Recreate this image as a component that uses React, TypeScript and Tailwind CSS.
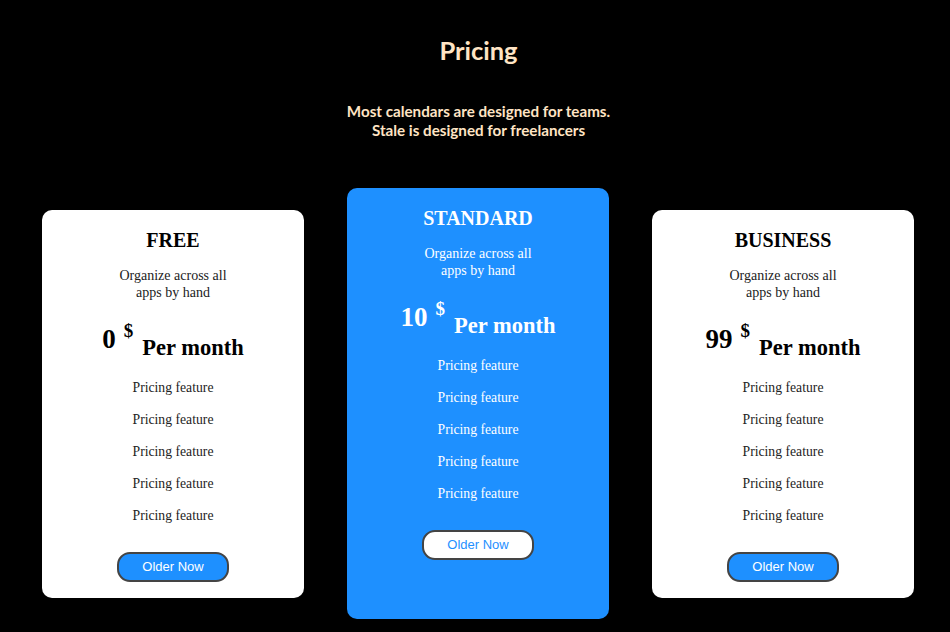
const features = ["Pricing feature", "Pricing feature", "Pricing feature", "Pricing feature", "Pricing feature"];

type Plan = { name: string; price: string; featured?: boolean };

const plans: Plan[] = [
  { name: "FREE", price: "0" },
  { name: "STANDARD", price: "10", featured: true },
  { name: "BUSINESS", price: "99" },
];

function PlanCard({ plan }: { plan: Plan }) {
  const featured = !!plan.featured;
  return (
    <div
      className={
        featured
          ? "w-[262px] rounded-[10px] bg-[#1e90ff] text-white pt-[18px] pb-[59px] flex flex-col items-center"
          : "w-[262px] rounded-[10px] bg-white text-black pt-[18px] pb-[16px] flex flex-col items-center"
      }
      style={{ fontFamily: '"Liberation Serif", "Times New Roman", serif' }}
    >
      <h2 className="text-[20px] leading-[24px] font-bold">{plan.name}</h2>
      <p className={`mt-[15px] text-[14px] leading-[17px] text-center ${featured ? "text-white" : "text-[#222]"}`}>
        Organize across all
        <br />
        apps by hand
      </p>
      <div className="mt-[22px] flex justify-center items-baseline font-bold">
        <span className="text-[27px] leading-[32px]">{plan.price}</span>
        <span className="relative -top-[11px] ml-[8px] text-[19px] leading-none">$</span>
        <span className="relative top-[7px] ml-[9px] text-[22.5px] leading-none">Per month</span>
      </div>
      <ul className={`mt-[17px] flex flex-col items-center text-[13.7px] leading-[32px] ${featured ? "text-white" : "text-[#222]"}`}>
        {features.map((f, i) => (
          <li key={i}>{f}</li>
        ))}
      </ul>
      <button
        className={
          featured
            ? "mt-[20px] w-[112px] h-[30px] rounded-[13px] border-2 border-[#444] bg-white text-[#1e90ff] text-[13px]"
            : "mt-[20px] w-[112px] h-[30px] rounded-[13px] border-2 border-[#444] bg-[#1e90ff] text-white text-[13px]"
        }
        style={{ fontFamily: '"Liberation Sans", Arial, sans-serif' }}
      >
        Older Now
      </button>
    </div>
  );
}

export default function App() {
  return (
    <div className="h-[632px] w-full bg-black overflow-hidden">
      <div className="ml-[42px] w-[873px] text-center text-[#ffe4c4]" style={{ fontFamily: "Lato, sans-serif" }}>
        <h1 className="pt-[34px] text-[25.5px] leading-[32px] font-bold">Pricing</h1>
        <p className="mt-[36px] text-[15.2px] leading-[19px] font-bold">
          Most calendars are designed for teams.
          <br />
          Stale is designed for freelancers
        </p>
      </div>
      <div className="mt-[48px] pl-[42px] flex items-center gap-[43px]">
        {plans.map((p) => (
          <PlanCard key={p.name} plan={p} />
        ))}
      </div>
    </div>
  );
}
